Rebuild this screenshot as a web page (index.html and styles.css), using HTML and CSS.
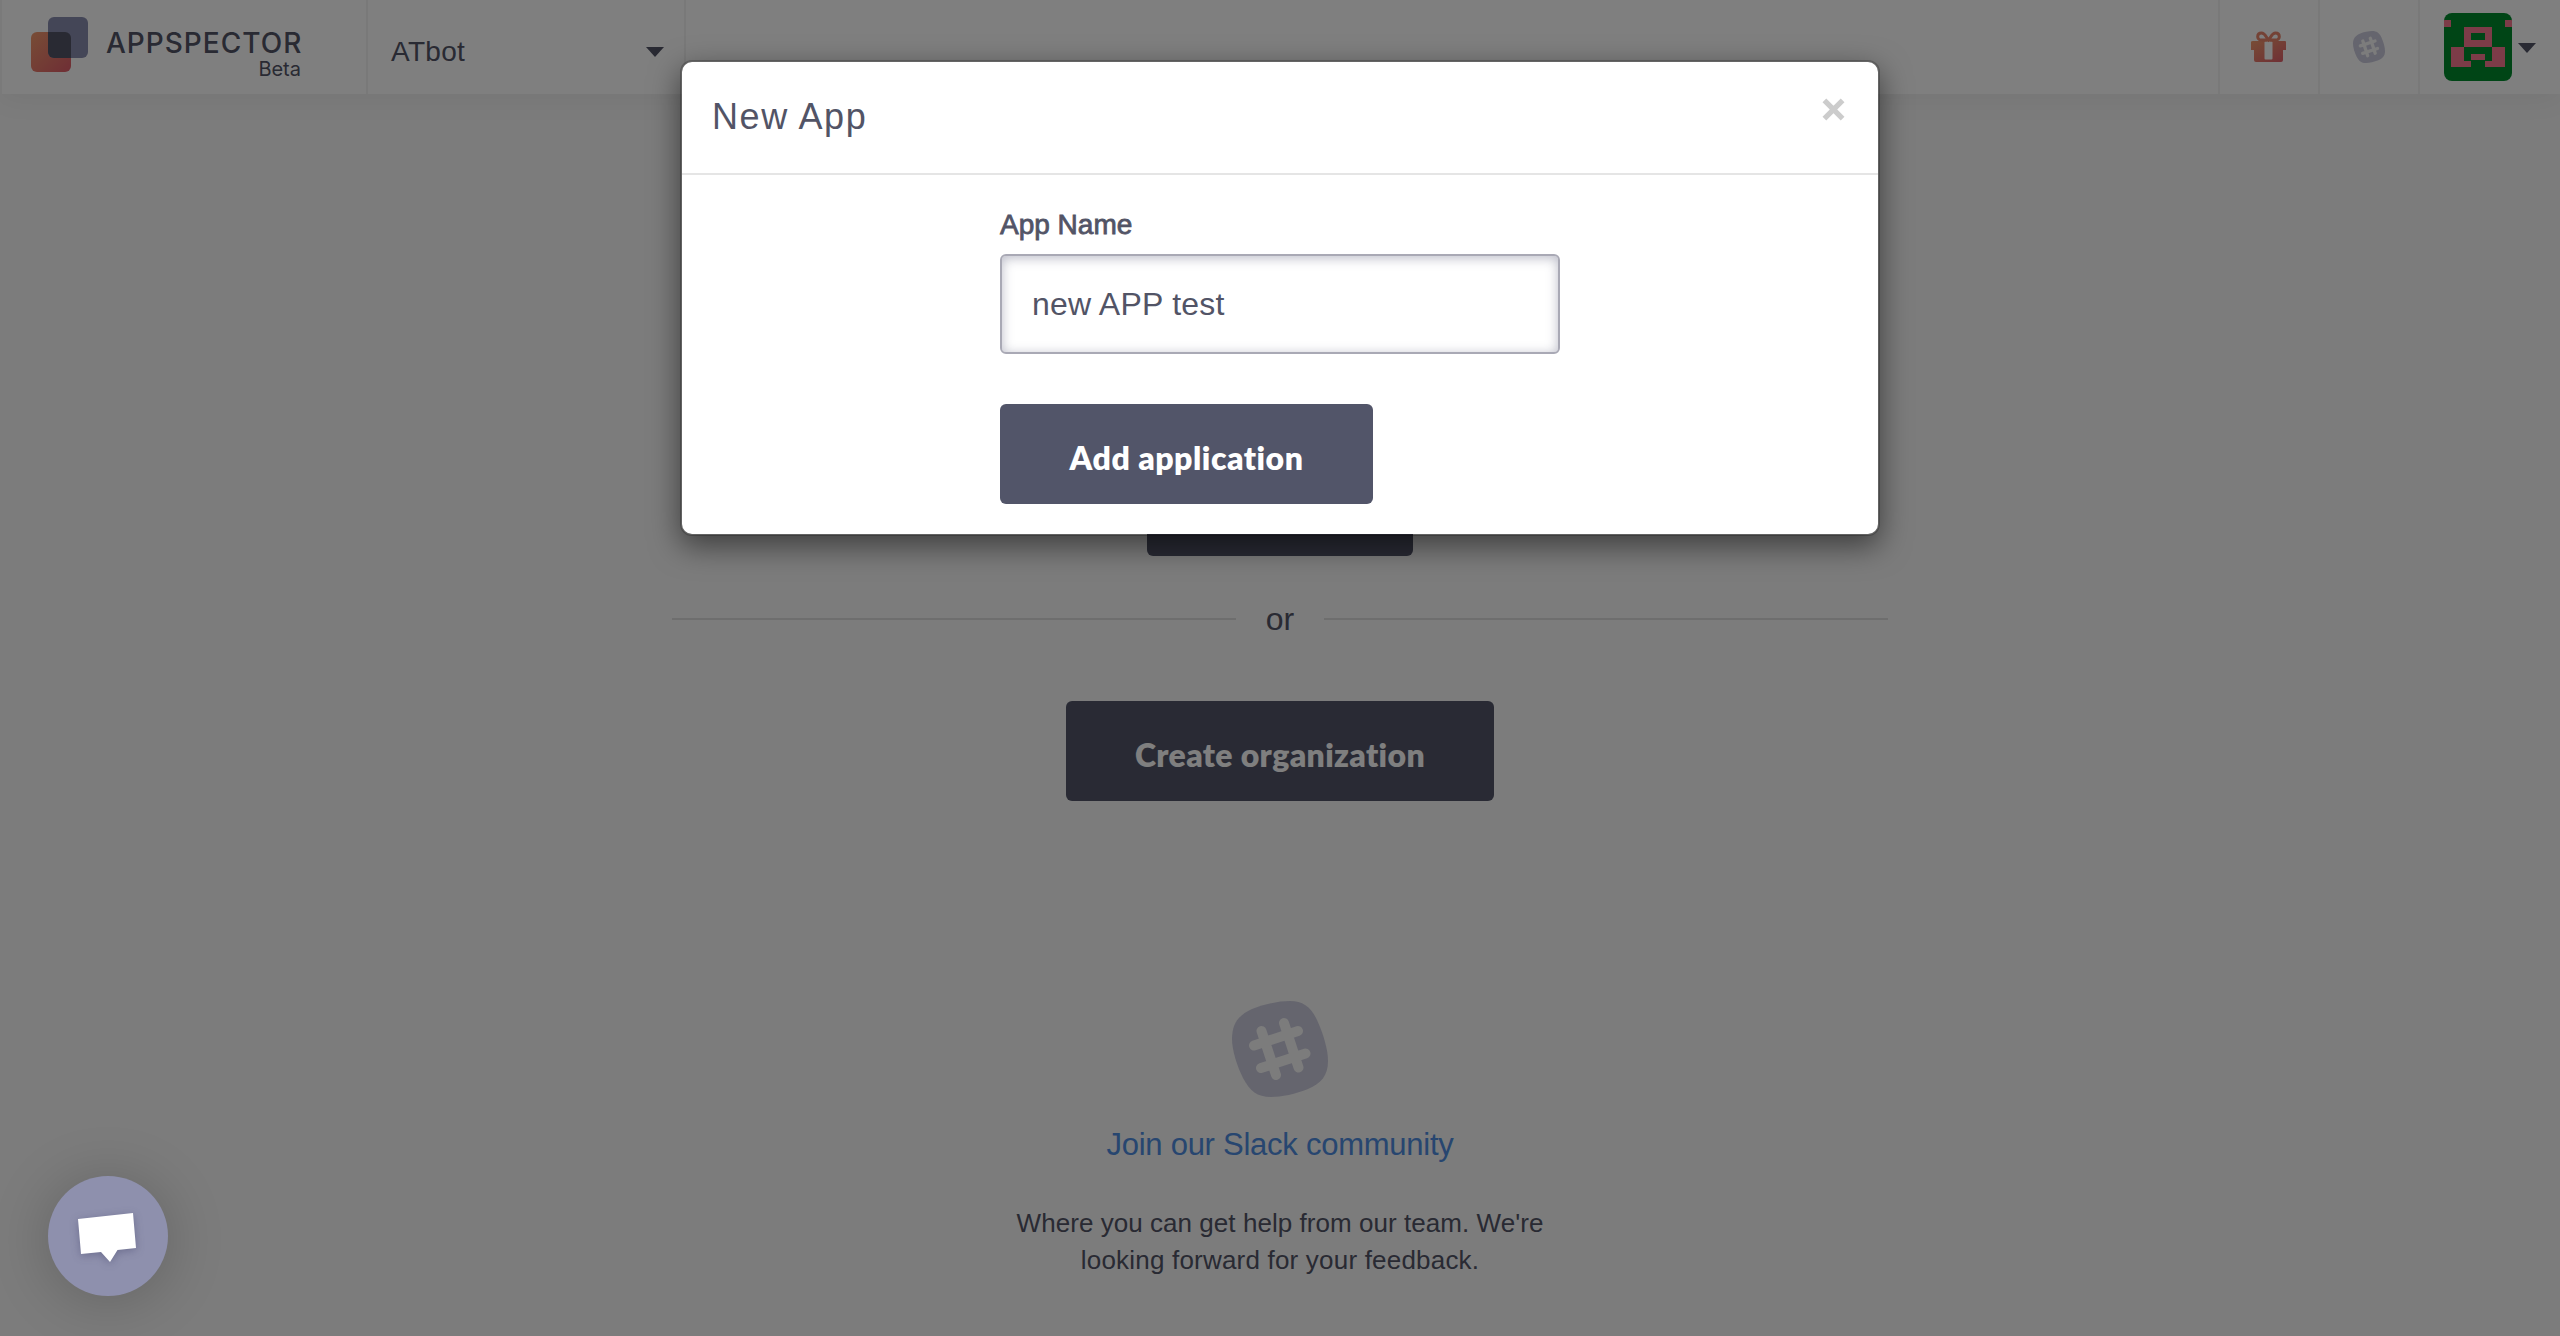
FILE: index.html
```html
<!DOCTYPE html>
<html lang="en">
<head>
<meta charset="utf-8">
<title>AppSpector</title>
<link rel="stylesheet" href="styles.css">
</head>
<body>
<svg class="defs" width="0" height="0" aria-hidden="true">
  <defs>
    <linearGradient id="warm" x1="0" y1="0" x2="1" y2="1"><stop offset="0" stop-color="#f09a6c"/><stop offset="1" stop-color="#de5c6a"/></linearGradient>
    <symbol id="slack" viewBox="0 0 96 96">
      <path fill="#cacadc" d="M58 0C71 0 79 6 85 19C91 32 96 48 96 60C96 75 89 82 76 88C64 93 49 96 39 96C25 96 18 90 11 77C5 65 0 49 0 38C0 22 7 14 20 8C32 3 47 0 58 0Z"/>
      <g stroke="#f8f8f8" stroke-width="10" stroke-linecap="round"><path d="M29.500 30L44 74M52 22L66.500 66.500M22 44.500L66 30M29 67L73.500 52.500"/></g>
    </symbol>
  </defs>
</svg>
<div class="page">
  <header class="topbar">
    <a class="brand">
      <svg class="logo" viewBox="0 0 58 56"><rect x="0" y="15" width="40" height="40" rx="6" fill="url(#warm)"/><rect x="17" y="0" width="40" height="41" rx="6" fill="#888cae"/><path d="M17 15H34A6 6 0 0 1 40 21V41H23A6 6 0 0 1 17 35Z" fill="#525466"/></svg>
      <span class="brand-text"><span class="name">APPSPECTOR</span><span class="beta">Beta</span></span>
    </a>
    <div class="org"><span class="org-name">ATbot</span><i class="caret"></i></div>
    <div class="cell gift"><svg width="36" height="32" viewBox="0 0 36 32"><path fill="url(#warm)" d="M2 10H34Q35 10 35 11V19H32V29Q32 31 30 31H5Q3 31 3 29V19H0V11Q0 10 2 10Z"/><rect x="13.500" y="10.500" width="8" height="18" rx="1" fill="#fff"/><path d="M16 9H10C5.500 9 5.500 2 10.500 2C14 2 15 6 17.500 9C20 6 21 2 24.500 2C29.500 2 29.500 9 25 9H19" fill="none" stroke="#e8846b" stroke-width="3"/></svg></div>
    <div class="cell"><svg width="32" height="32"><use href="#slack"/></svg></div>
    <div class="user">
      <svg class="avatar" viewBox="0 0 68 68" shape-rendering="crispEdges"><rect width="68" height="68" fill="#008a2d"/><path fill="#f87890" d="M0 7H7V14H0ZM61 7H68V14H61ZM20 14H48V34H20ZM7 34H20V48H27V54H7ZM48 34H61V54H41V48H48ZM27 41H41V47H27Z"/><path fill="#008a2d" d="M27 20H41V27H27Z"/></svg>
      <i class="caret"></i>
    </div>
  </header>
  <main class="content">
    <button class="btn create-app">Create app</button>
    <div class="or"><span>or</span></div>
    <button class="btn create-org"><span class="org-label">Create organization</span></button>
    <svg class="slack-big"><use href="#slack"/></svg>
    <a class="join">Join our Slack community</a>
    <p class="help"><span class="help-a">Where you can get help from our team. We're</span><br><span class="help-b">looking forward for your feedback.</span></p>
  </main>
</div>
<div class="backdrop">
  <section class="modal">
    <div class="modal-head"><h1>New App</h1><svg class="close" viewBox="0 0 24 24"><path d="M2.500 2.500L21.500 21.500M21.500 2.500L2.500 21.500" stroke="#ccc" stroke-width="5.500"/></svg></div>
    <div class="modal-body">
      <label><span class="label-text">App Name</span></label>
      <div class="field"><span class="value">new APP test</span></div>
      <button class="btn add"><span class="add-label">Add application</span></button>
    </div>
  </section>
</div>
<div class="chat"><svg viewBox="0 0 120 120"><path d="M30 43L85 37L88 72L69.500 74L62 86L53 76L33 78Z" fill="#fff"/></svg></div>
</body>
</html>
```
FILE: styles.css
```css
* { box-sizing: border-box; }
body { margin: 0; background: #f8f8f8; color: #525466; font-family: "Liberation Sans", Arial, sans-serif; overflow: hidden; }
.defs { position: absolute; }
.page { height: 1336px; }
.topbar { display: flex; height: 94px; background: #fff; box-shadow: 0 4px 28px rgba(0,0,0,.06); border-left: 2px solid #f4f4f4; }
.brand { display: flex; width: 366px; padding: 17px 0 0 29px; border-right: 2px solid #f2f2f2; }
.logo { width: 58px; height: 56px; flex: none; }
.brand-text { display: flex; flex-direction: column; width: 195px; margin: 9px 0 0 17px; }
.name { font: 500 28px/34px Inter, sans-serif; letter-spacing: 1px; white-space: nowrap; }
.beta { font: 400 20px/22px Inter, sans-serif; align-self: flex-end; margin-top: -2px; }
.org { display: flex; width: 318px; padding: 0 20px 0 23px; border-right: 2px solid #f2f2f2; align-items: center; justify-content: space-between; }
.org-name { font-size: 28px; padding-top: 9px; letter-spacing: .3px; }
.caret { width: 0; height: 0; border: 9px solid transparent; border-top: 10px solid #525466; border-bottom: 0; margin-top: 9px; }
.cell { display: flex; width: 100px; border-left: 2px solid #f2f2f2; align-items: center; justify-content: center; }
.gift { margin-left: auto; }
.user { display: flex; width: 142px; border-left: 2px solid #f2f2f2; align-items: center; padding-left: 24px; gap: 6px; }
.user .caret { margin-top: 1px; }
.avatar { width: 68px; height: 68px; border-radius: 8px; }
.content { display: flex; flex-direction: column; align-items: center; padding-top: 362px; }
.btn { border: 0; height: 100px; border-radius: 6px; background: #525569; color: #fff; font: 800 32px/40px Lato, sans-serif; font-variant-ligatures: none; padding: 7px 0 0; white-space: nowrap; }
.create-app { width: 266px; }
.or { display: flex; width: 1216px; height: 40px; margin-top: 43px; align-items: center; font-size: 32px; gap: 30px; }
.or::before, .or::after { content: ""; height: 2px; background: #dcdcdc; flex: 1; }
.create-org { width: 428px; margin-top: 62px; letter-spacing: .35px; }
.slack-big { width: 96px; height: 96px; margin-top: 200px; }
.join { font-size: 31px; line-height: 40px; letter-spacing: -.25px; margin-top: 28px; color: #4e8ce0; }
.help { font-size: 26px; line-height: 37px; text-align: center; margin: 40px 0 0; }
.help-a { letter-spacing: .05px; }
.help-b { letter-spacing: .2px; }
.backdrop { position: absolute; inset: 0; background: rgba(0,0,0,.5); display: flex; justify-content: center; align-items: flex-start; padding-top: 60px; }
.modal { width: 1200px; height: 476px; background: #fff; background-clip: padding-box; border: 2px solid rgba(0,0,0,.2); border-radius: 12px; box-shadow: 0 10px 30px rgba(0,0,0,.5); }
.modal-head { display: flex; height: 113px; justify-content: space-between; border-bottom: 2px solid #e5e5e5; padding: 32px 33px 0 30px; }
h1 { font-size: 36px; line-height: 44px; font-weight: 400; letter-spacing: 1.6px; margin: 1px 0 0; }
.close { width: 23px; height: 23px; margin-top: 4px; }
.modal-body { display: flex; flex-direction: column; padding: 34px 0 0 318px; align-items: flex-start; }
label { font-size: 28px; line-height: 32px; -webkit-text-stroke: .8px #525466; }
.field { display: flex; align-items: center; width: 560px; height: 100px; margin-top: 13px; padding-left: 30px; font-size: 32px; letter-spacing: .25px; border: 2px solid #a9a9b5; border-radius: 6px; box-shadow: inset 0 2px 12px rgba(82,84,115,.4); }
.value { padding-top: 1px; }
.add { width: 373px; margin-top: 50px; letter-spacing: .5px; }
.chat { position: absolute; left: 48px; top: 1176px; width: 120px; height: 120px; border-radius: 50%; background: #8e90ad; box-shadow: 0 4px 60px rgba(0,0,0,.2); }
.chat svg { display: block; filter: drop-shadow(0 2px 4px rgba(50,50,90,.35)); }
```
